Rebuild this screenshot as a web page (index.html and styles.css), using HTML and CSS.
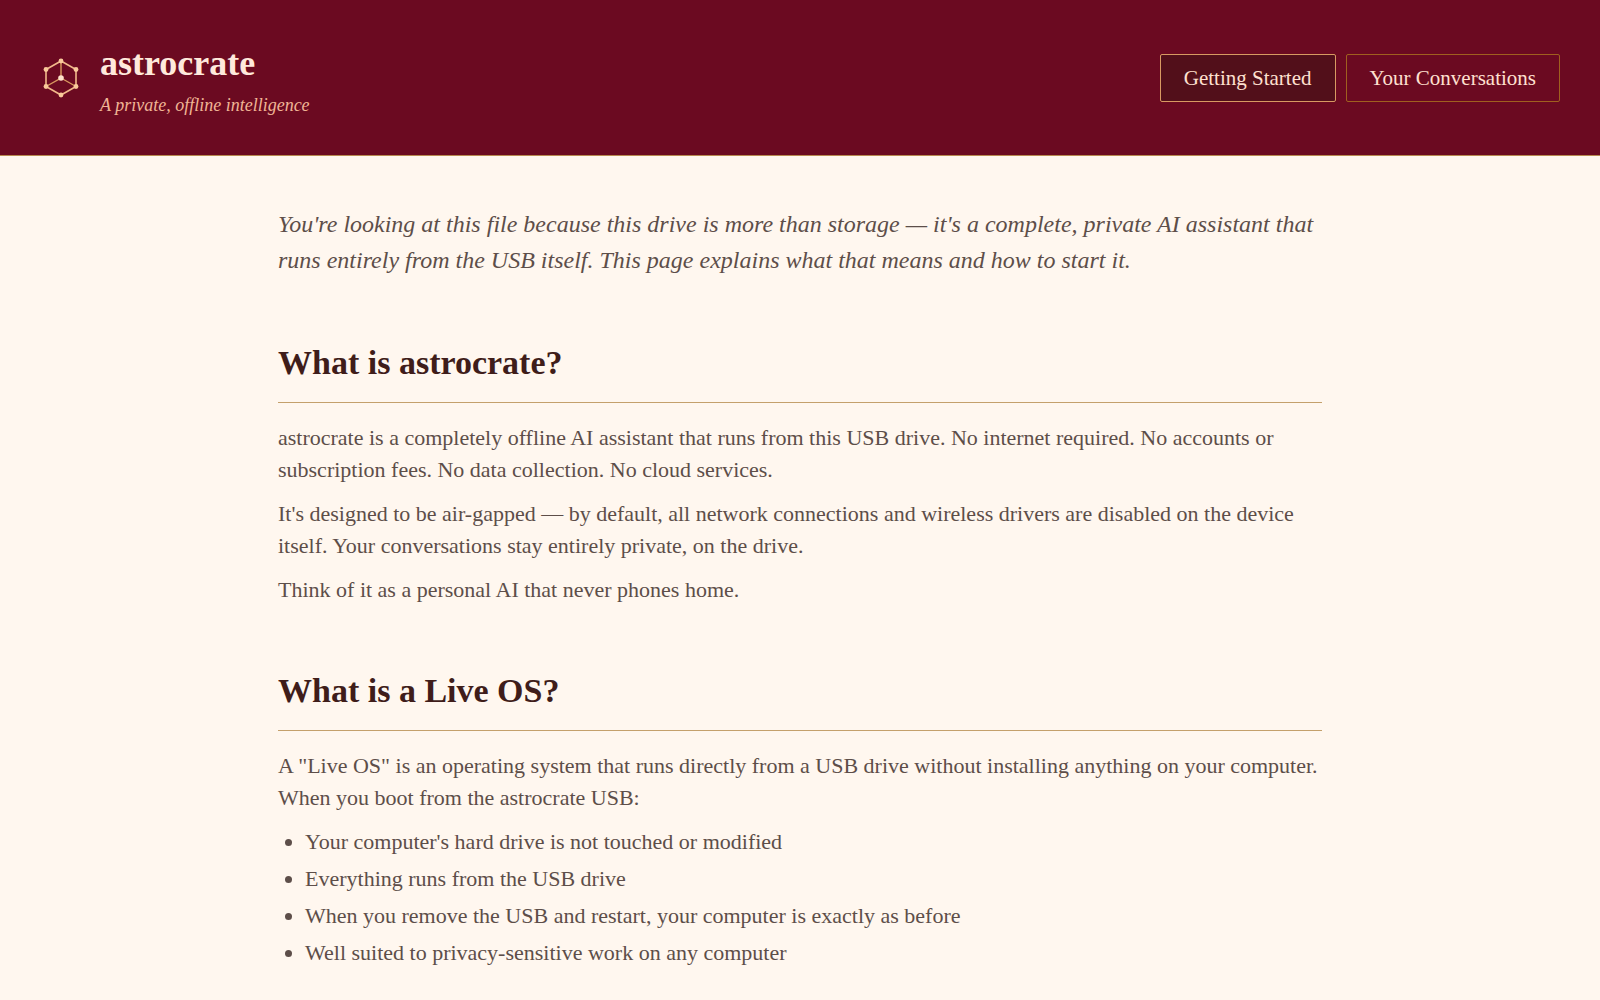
FILE: index.html
```html
<!DOCTYPE html>
<html lang="en">
<head>
  <meta charset="UTF-8">
  <meta name="viewport" content="width=device-width, initial-scale=1.0">
  <title>astrocrate - Getting Started</title>
  <link rel="stylesheet" href="styles.css">
</head>
<body>
  <header class="site-header">
    <div class="brand">
      <svg class="logo" viewBox="0 0 40 40" aria-hidden="true">
        <g fill="none" stroke="#f2b98a">
          <path d="M20 3 L35 11.5 V28.5 L20 37 L5 28.5 V11.5 Z" stroke-width="1.6"/>
          <path d="M20 3 V20 L5 28.5 M20 20 L35 28.5" stroke="#d9995f" stroke-width="1.4"/>
        </g>
        <g fill="#f9c99b">
          <circle cx="20" cy="3" r="2.4"/>
          <circle cx="35" cy="11.5" r="2.4"/>
          <circle cx="35" cy="28.5" r="2.4"/>
          <circle cx="20" cy="37" r="2.4"/>
          <circle cx="5" cy="28.5" r="2.4"/>
          <circle cx="5" cy="11.5" r="2.4"/>
        </g>
        <circle cx="20" cy="20" r="2.8" fill="#ffe3cc"/>
      </svg>
      <div>
        <h1>astrocrate</h1>
        <p class="tagline">A private, offline intelligence</p>
      </div>
    </div>
    <nav class="nav">
      <a href="#" class="nav-link active">Getting Started</a>
      <a href="#" class="nav-link">Your Conversations</a>
    </nav>
  </header>

  <main class="content">
    <p class="intro">You're looking at this file because this drive is more than storage — it's a complete, private AI assistant that runs entirely from the USB itself. This page explains what that means and how to start it.</p>

    <section>
      <h2>What is astrocrate?</h2>
      <p>astrocrate is a completely offline AI assistant that runs from this USB drive. No internet required. No accounts or subscription fees. No data collection. No cloud services.</p>
      <p>It's designed to be air-gapped — by default, all network connections and wireless drivers are disabled on the device itself. Your conversations stay entirely private, on the drive.</p>
      <p>Think of it as a personal AI that never phones home.</p>
    </section>

    <section>
      <h2>What is a Live OS?</h2>
      <p>A "Live OS" is an operating system that runs directly from a USB drive without installing anything on your computer. When you boot from the astrocrate USB:</p>
      <ul>
        <li>Your computer's hard drive is not touched or modified</li>
        <li>Everything runs from the USB drive</li>
        <li>When you remove the USB and restart, your computer is exactly as before</li>
        <li>Well suited to privacy-sensitive work on any computer</li>
      </ul>
    </section>
  </main>
</body>
</html>
```
FILE: styles.css
```css
* {
  margin: 0;
  padding: 0;
  box-sizing: border-box;
}

body {
  font-family: "Liberation Serif", serif;
  font-size: 22px;
  line-height: 32px;
  color: #5d4e49;
  background: #fff7ef;
}

.site-header {
  display: flex;
  justify-content: space-between;
  align-items: center;
  padding: 36px 40px;
  background: #6b0a21;
  border-bottom: 1px solid #b8894f;
}

.brand {
  display: flex;
  align-items: center;
  gap: 18px;
}

.logo {
  width: 42px;
  height: 40px;
}

h1 {
  font-size: 36px;
  line-height: 55px;
  color: #ffe9dc;
}

.tagline {
  font-size: 18px;
  line-height: 28px;
  font-style: italic;
  color: #f0b595;
}

.nav {
  display: flex;
  gap: 10px;
}

.nav-link {
  padding: 8px 23px;
  border: 1px solid #a0601f;
  border-radius: 2px;
  font-size: 21px;
  line-height: 30px;
  color: #ffe0d0;
  text-decoration: none;
}

.nav-link.active {
  background: #520f1a;
  border-color: #d89a62;
}

.content {
  max-width: 1044px;
  margin: 0 auto;
  padding: 50px 0;
}

.intro {
  font-size: 24px;
  line-height: 36px;
  font-style: italic;
}

section {
  margin-top: 63px;
}

h2 {
  margin-bottom: 19px;
  padding-bottom: 17px;
  border-bottom: 1px solid #c4a06c;
  font-size: 34px;
  line-height: 44px;
  color: #3f1d1a;
}

section p + p,
section ul {
  margin-top: 12px;
}

ul {
  padding-left: 27px;
}

li {
  margin-bottom: 5px;
}
```
